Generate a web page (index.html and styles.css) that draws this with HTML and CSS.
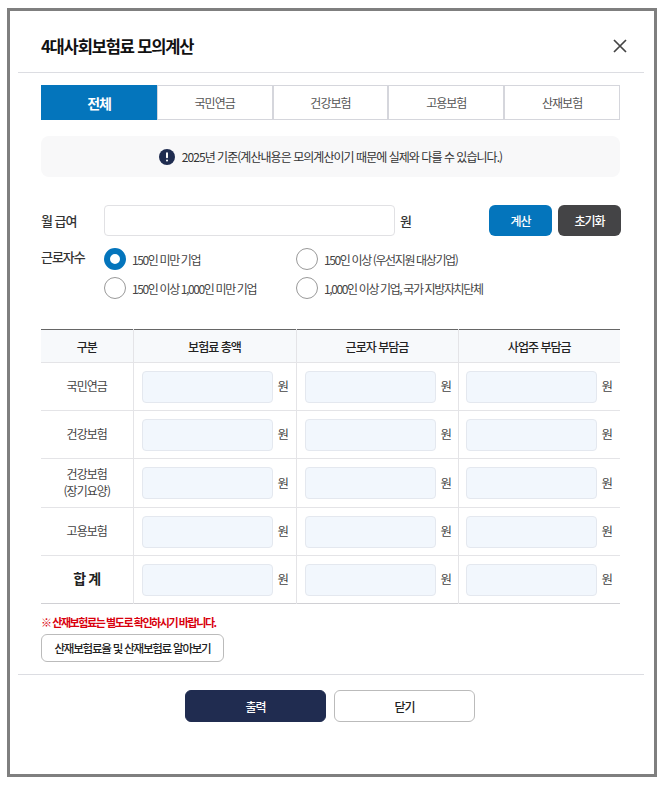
FILE: index.html
```html
<!DOCTYPE html>
<html lang="ko">

<head>
    <meta charset="UTF-8">
    <title>4대사회보험료 모의계산</title>
    <link rel="stylesheet" href="styles.css">
</head>

<body>
    <section class="calc-modal">
        <div class="calc-header">
            <h3>4대사회보험료 모의계산</h3>
            <svg class="calc-close" width="14" height="14" viewBox="0 0 14 14">
                <path d="M1 1L13 13M13 1L1 13" stroke="#444" stroke-width="1.7" fill="none" />
            </svg>
        </div>

        <div class="calc-body">
            <ul class="calc-tabs">
                <li class="active">전체</li>
                <li>국민연금</li>
                <li>건강보험</li>
                <li>고용보험</li>
                <li>산재보험</li>
            </ul>

            <div class="calc-notice">
                <svg width="16" height="16" viewBox="0 0 16 16">
                    <circle cx="8" cy="8" r="8" fill="#1f2c50" />
                    <rect x="7" y="3.2" width="2" height="6" rx="1" fill="#fff" />
                    <rect x="7" y="10.5" width="2" height="2" rx="1" fill="#fff" />
                </svg>
                <span>2025년 기준(계산내용은 모의계산이기 때문에 실제와 다를 수 있습니다.)</span>
            </div>

            <div class="calc-pay">
                <span class="calc-label">월 급여</span>
                <input type="text" class="pay-input">
                <span class="pay-unit">원</span>
                <button class="btn-calc">계산</button>
                <button class="btn-reset">초기화</button>
            </div>

            <div class="calc-workers">
                <span class="calc-label">근로자수</span>
                <div class="radio-grid">
                    <label><i class="radio on"></i>150인 미만 기업</label>
                    <label><i class="radio"></i>150인 이상 (우선지원 대상기업)</label>
                    <label><i class="radio"></i>150인 이상 1,000인 미만 기업</label>
                    <label><i class="radio"></i>1,000인 이상 기업, 국가 지방자치단체</label>
                </div>
            </div>

            <table class="calc-table">
                <thead>
                    <tr>
                        <th>구분</th>
                        <th>보험료 총액</th>
                        <th>근로자 부담금</th>
                        <th>사업주 부담금</th>
                    </tr>
                </thead>
                <tbody>
                    <tr>
                        <td class="name">국민연금</td>
                        <td><div class="cell"><input type="text"><span>원</span></div></td>
                        <td><div class="cell"><input type="text"><span>원</span></div></td>
                        <td><div class="cell"><input type="text"><span>원</span></div></td>
                    </tr>
                    <tr>
                        <td class="name">건강보험</td>
                        <td><div class="cell"><input type="text"><span>원</span></div></td>
                        <td><div class="cell"><input type="text"><span>원</span></div></td>
                        <td><div class="cell"><input type="text"><span>원</span></div></td>
                    </tr>
                    <tr class="row-tall">
                        <td class="name">건강보험<br>(장기요양)</td>
                        <td><div class="cell"><input type="text"><span>원</span></div></td>
                        <td><div class="cell"><input type="text"><span>원</span></div></td>
                        <td><div class="cell"><input type="text"><span>원</span></div></td>
                    </tr>
                    <tr>
                        <td class="name">고용보험</td>
                        <td><div class="cell"><input type="text"><span>원</span></div></td>
                        <td><div class="cell"><input type="text"><span>원</span></div></td>
                        <td><div class="cell"><input type="text"><span>원</span></div></td>
                    </tr>
                    <tr>
                        <td class="name total">합 계</td>
                        <td><div class="cell"><input type="text"><span>원</span></div></td>
                        <td><div class="cell"><input type="text"><span>원</span></div></td>
                        <td><div class="cell"><input type="text"><span>원</span></div></td>
                    </tr>
                </tbody>
            </table>

            <p class="calc-warn">※ 산재보험료는 별도로 확인하시기 바랍니다.</p>
            <button class="btn-more">산재보험료율 및 산재보험료 알아보기</button>
        </div>

        <div class="calc-footer">
            <button class="btn-print">출력</button>
            <button class="btn-close">닫기</button>
        </div>
    </section>
</body>

</html>
```

FILE: styles.css
```css
* {
    margin: 0;
    padding: 0;
    box-sizing: border-box;
}

body {
    background: #fff;
    font-family: "Noto Sans CJK KR", "Noto Sans", sans-serif;
    color: #333;
    letter-spacing: -0.06em;
}

button {
    font-family: inherit;
    letter-spacing: inherit;
    cursor: pointer;
}

.calc-modal {
    width: 650px;
    height: 769px;
    margin: 8px 0 0 7px;
    border: 3px solid #7f7f7f;
    padding: 0 10px 0 8px;
}

.calc-header {
    height: 62px;
    padding: 8px 17px 0 23px;
    display: flex;
    align-items: center;
    justify-content: space-between;
    border-bottom: 1px solid #dcdde2;
}

.calc-header h3 {
    font-size: 16.5px;
    font-weight: 700;
    letter-spacing: -0.07em;
    color: #111;
}

.calc-body {
    padding: 12px 24px 0 23px;
    border-bottom: 1px solid #dcdde2;
    height: 602px;
}

.calc-tabs {
    display: grid;
    grid-template-columns: repeat(5, 1fr);
    list-style: none;
    height: 35px;
}

.calc-tabs li {
    display: flex;
    align-items: center;
    justify-content: center;
    font-size: 12px;
    color: #555;
    border: 1px solid #d5d6dc;
}

.calc-tabs li.active {
    background: #0475bc;
    border-color: #0475bc;
    color: #fff;
    font-size: 14px;
    font-weight: 700;
    letter-spacing: -0.09em;
}

.calc-notice {
    margin-top: 16px;
    height: 41px;
    background: #f8f8f9;
    border-radius: 8px;
    display: flex;
    align-items: center;
    justify-content: center;
    gap: 7px;
    font-size: 12px;
    color: #333;
}

.calc-pay {
    margin-top: 28px;
    display: flex;
    align-items: center;
    height: 31px;
}

.calc-pay > * {
    flex: none;
}

.calc-label {
    width: 63px;
    font-size: 13px;
    font-weight: 500;
    letter-spacing: -0.08em;
    color: #333;
}

.pay-input {
    width: 291px;
    height: 31px;
    border: 1px solid #e1e1e4;
    border-radius: 4px;
    background: #fff;
}

.pay-unit {
    margin-left: 5px;
    width: 89px;
    font-size: 13px;
    font-weight: 500;
}

.calc-pay button {
    width: 63px;
    height: 31px;
    border: 0;
    border-radius: 6px;
    color: #fff;
    font-size: 12px;
    font-weight: 500;
    letter-spacing: -0.08em;
}

.btn-calc {
    background: #0475bc;
}

.btn-reset {
    margin-left: 6px;
    background: #444446;
}

.calc-workers {
    margin-top: 12px;
    display: flex;
    align-items: flex-start;
}

.calc-workers .calc-label {
    line-height: 18px;
}

.radio-grid {
    display: grid;
    grid-template-columns: 192px auto;
    grid-auto-rows: 29px;
}

.radio-grid label {
    display: flex;
    align-items: center;
    gap: 6px;
    font-size: 12px;
    letter-spacing: -0.115em;
    color: #444;
    height: 22px;
}

.radio {
    width: 22px;
    height: 22px;
    border-radius: 50%;
    border: 1.5px solid #999;
    background: #fff;
}

.radio.on {
    border: 6px solid #0475bc;
}

.calc-table {
    margin-top: 23px;
    width: 579px;
    table-layout: fixed;
    border-collapse: collapse;
    border-top: 1px solid #666;
    border-bottom: 1px solid #d0d0d4;
}

.calc-table th {
    height: 33px;
    background: #f7f9fb;
    font-size: 12px;
    font-weight: 500;
    color: #222;
    border-bottom: 1px solid #e4e4e7;
    border-left: 1px solid #e4e4e7;
}

.calc-table th:first-child,
.calc-table td:first-child {
    width: 92px;
    border-left: 0;
}

.calc-table th:nth-child(2) {
    width: 163px;
}

.calc-table td {
    height: 48px;
    border-bottom: 1px solid #e4e4e7;
    border-left: 1px solid #e4e4e7;
    padding: 0 8px;
}

.calc-table td:last-child {
    padding-left: 7px;
}

.calc-table .row-tall td {
    height: 49px;
}

.calc-table tr:last-child td {
    border-bottom: 0;
}

.calc-table td.name {
    padding: 0 0 2px;
    text-align: center;
    font-size: 12px;
    line-height: 17px;
    color: #444;
}

.calc-table td.total {
    font-size: 14px;
    font-weight: 700;
    color: #222;
}

.cell {
    display: flex;
    align-items: center;
    gap: 5px;
    font-size: 12.5px;
    color: #444;
}

.cell span {
    margin-top: -2px;
}

.cell input {
    width: 131px;
    height: 32px;
    border: 1px solid #e4e8ef;
    border-radius: 4px;
    background: #f2f7fd;
}

.calc-warn {
    margin-top: 10px;
    font-size: 11px;
    font-weight: 700;
    letter-spacing: -0.13em;
    color: #d9000d;
    line-height: 17px;
}

.btn-more {
    display: block;
    margin-top: 3px;
    width: 183px;
    height: 28px;
    border: 1px solid #bbb;
    border-radius: 6px;
    background: #fff;
    font-size: 11.5px;
    font-weight: 500;
    letter-spacing: -0.105em;
    color: #222;
}

.calc-footer {
    margin-top: 15px;
    padding-right: 2px;
    display: flex;
    justify-content: center;
    gap: 8px;
}

.calc-footer button {
    width: 141px;
    height: 32px;
    border-radius: 6px;
    font-size: 12px;
    font-weight: 500;
}

.btn-print {
    background: #202c50;
    border: 1px solid #202c50;
    color: #fff;
}

.btn-close {
    background: #fff;
    border: 1px solid #bbb;
    color: #222;
}
```
